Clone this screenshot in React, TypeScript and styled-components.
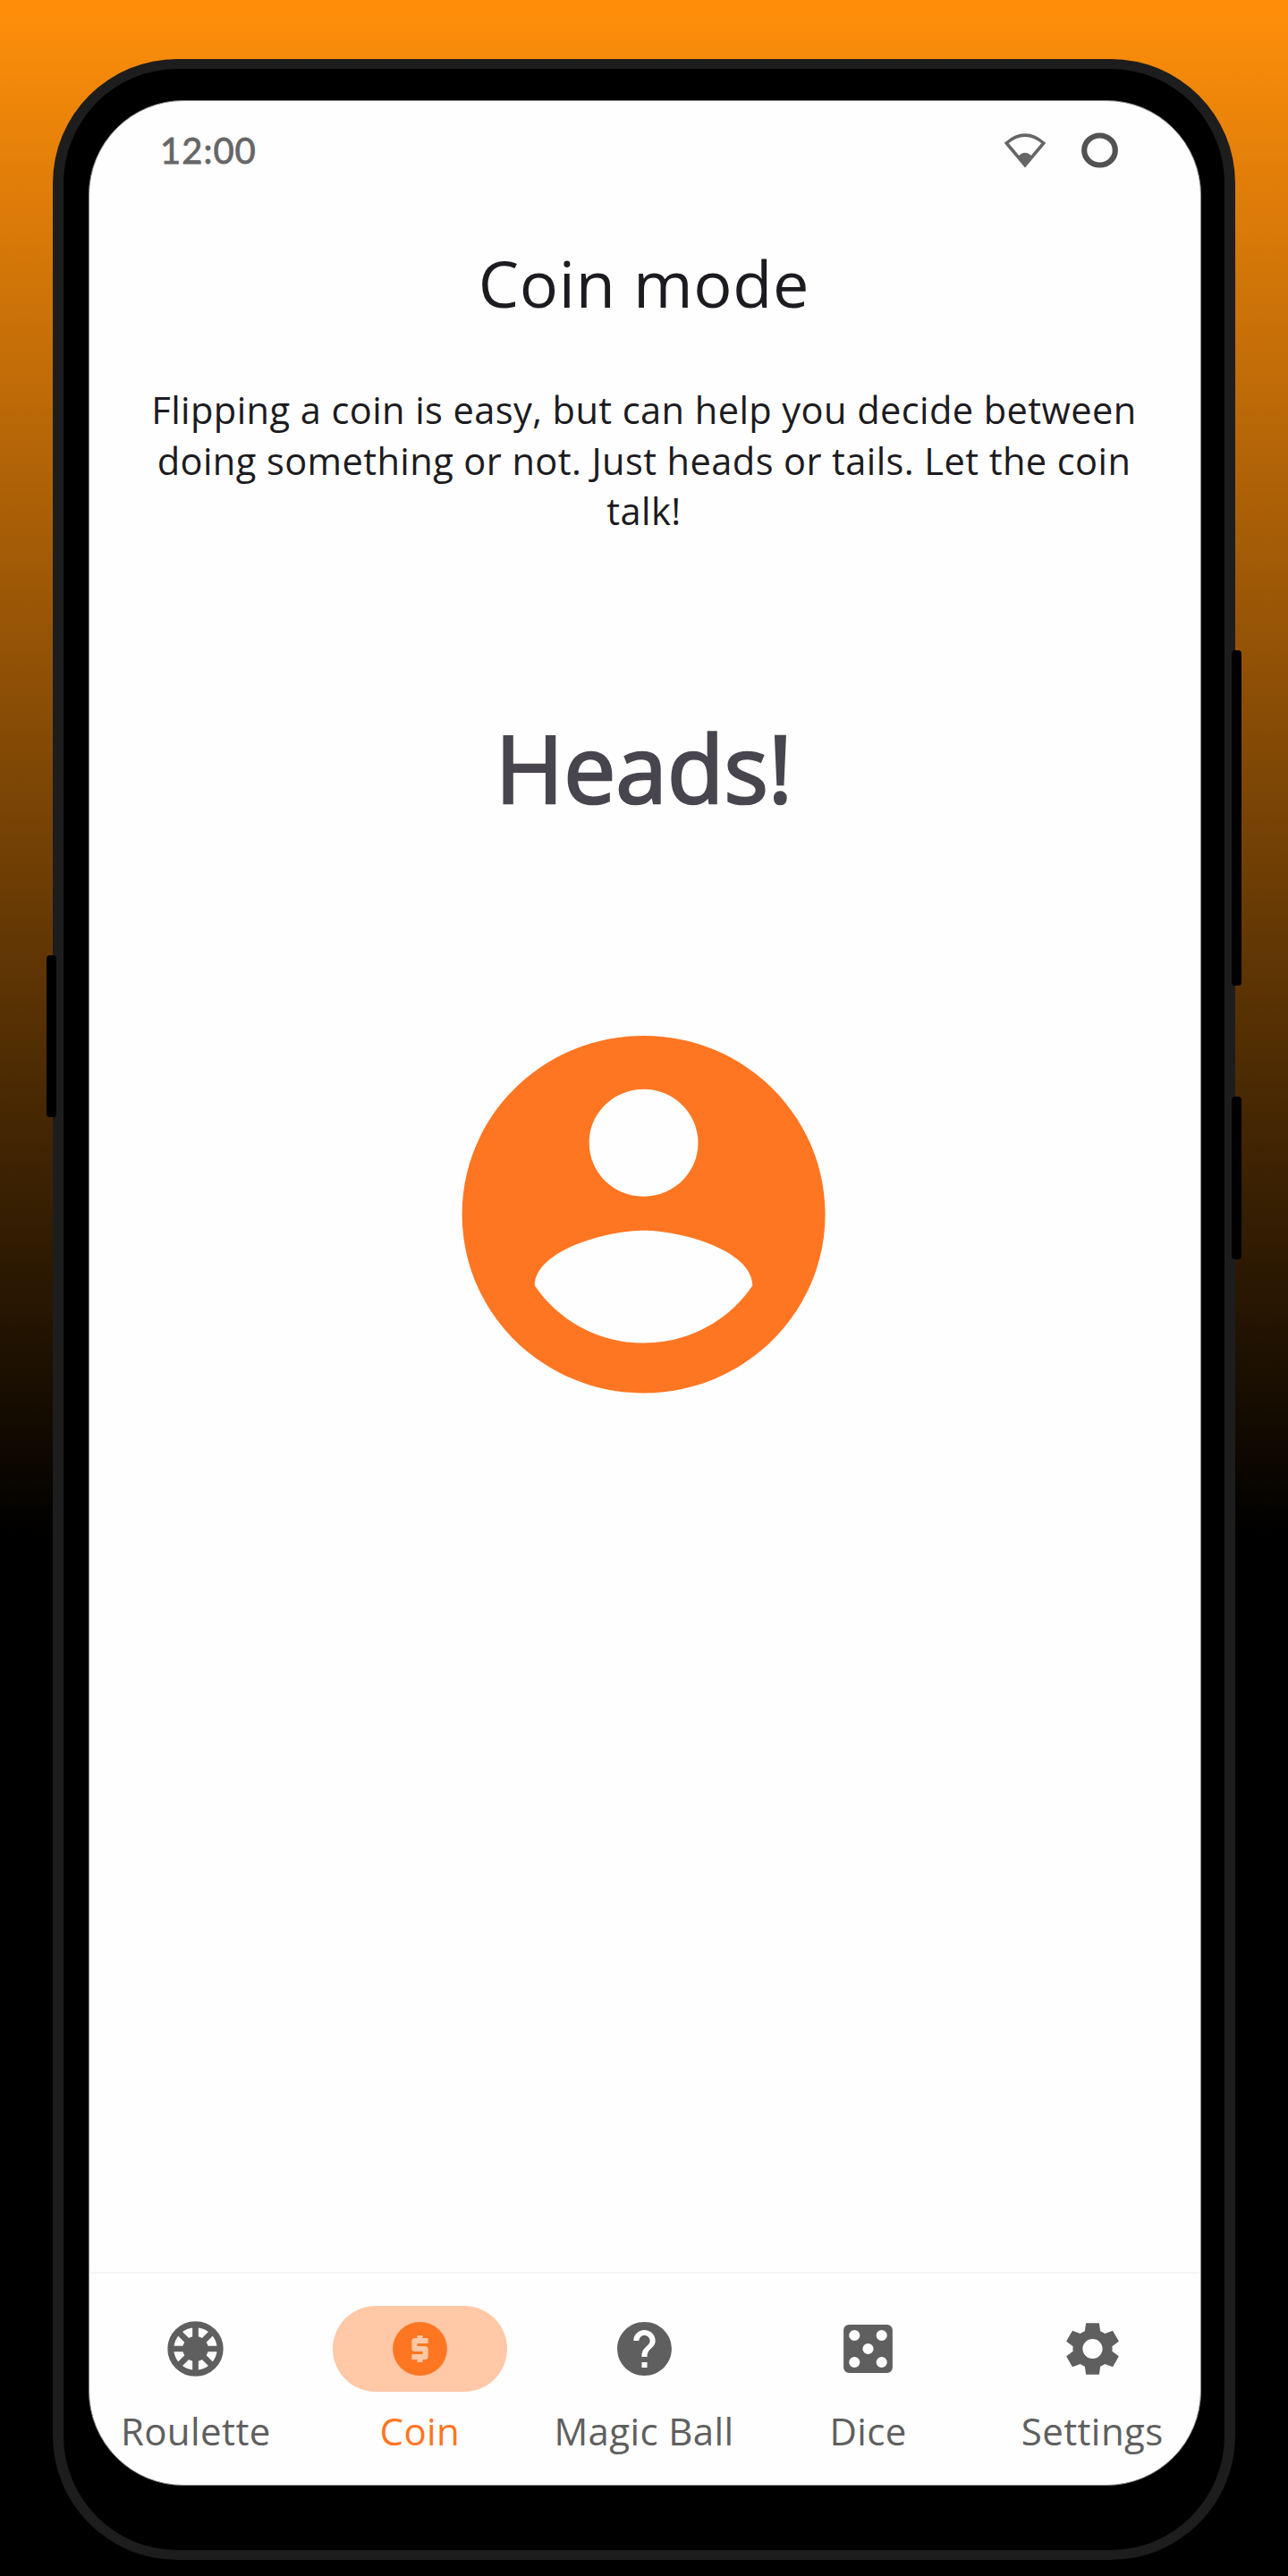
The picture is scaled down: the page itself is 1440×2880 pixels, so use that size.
import React from "react";
import styled, { createGlobalStyle } from "styled-components";

const GlobalStyle = createGlobalStyle`
  * { box-sizing: border-box; }
  html, body { margin: 0; padding: 0; background: #000; }
`;

const ORANGE = "#ff7622";
const GREY = "#5f5f5f";

const Backdrop = styled.div`
  width: 1440px;
  height: 2880px;
  padding: 66px 59px 18px;
  overflow: hidden;
  background: linear-gradient(180deg, #ff8f0a 0, #000 1720px);
  font-family: "Open Sans", "Noto Sans", sans-serif;
`;

const Phone = styled.div`
  position: relative;
  width: 1322px;
  height: 2796px;
  padding: 35px 28px 0;
  border: solid #1d1d1d;
  border-width: 11px 12px;
  border-radius: 139px;
  background: #000;
`;

const SideKey = styled.div<{ $side: "left" | "right"; $top: number; $height: number }>`
  position: absolute;
  ${(p) => p.$side}: -19px;
  top: ${(p) => p.$top}px;
  width: 11px;
  height: ${(p) => p.$height}px;
  border-radius: 4px;
  background: #000;
`;

const Screen = styled.div`
  display: flex;
  flex-direction: column;
  width: 1244px;
  height: 2667px;
  border: 1px solid #8a8a8a;
  border-radius: 106px;
  overflow: hidden;
  background: #fefefe;
`;

const StatusBar = styled.header`
  display: flex;
  align-items: center;
  justify-content: space-between;
  height: 110px;
  padding: 0 92px 0 79px;
`;

const Clock = styled.span`
  font-family: Lato, sans-serif;
  font-size: 40px;
  line-height: 48px;
  letter-spacing: 1px;
  color: #666;
  -webkit-text-stroke: 0.8px #666;
`;

const StatusIcons = styled.div`
  display: flex;
  align-items: center;
  gap: 40px;
`;

const Main = styled.main`
  display: flex;
  flex: 1;
  flex-direction: column;
  align-items: center;
  padding: 44px 60px 0 58px;
  text-align: center;
`;

const Title = styled.h1`
  margin: 0;
  font-size: 72px;
  font-weight: 400;
  line-height: 98px;
  letter-spacing: 0.7px;
  color: #1c1b20;
`;

const Description = styled.p`
  margin: 65px 0 0;
  font-size: 41.6px;
  line-height: 56.7px;
  letter-spacing: 0.4px;
  color: #1c1b20;
`;

const Result = styled.p`
  margin: 184.4px 0 0;
  font-size: 103.5px;
  font-weight: 400;
  line-height: 145px;
  letter-spacing: 0.1px;
  color: #48454e;
  -webkit-text-stroke: 2.7px #48454e;
`;

const CoinFace = styled.svg`
  width: 487.2px;
  height: 479.4px;
  margin-top: 188px;
  fill: ${ORANGE};
`;

const NavBar = styled.nav`
  display: flex;
  justify-content: center;
  height: 238px;
  padding: 36px 2px 0 0;
  border-top: 2px solid #f6f6f6;
`;

const NavItem = styled.div<{ $active: boolean }>`
  display: flex;
  flex: 0 0 250.6px;
  flex-direction: column;
  align-items: center;
  gap: 15px;
  color: ${(p) => (p.$active ? ORANGE : GREY)};
`;

const Pill = styled.div<{ $active: boolean }>`
  display: flex;
  align-items: center;
  justify-content: center;
  width: 195px;
  height: 96px;
  border-radius: 48px;
  background: ${(p) => (p.$active ? "#ffc8a6" : "transparent")};
`;

const NavIcon = styled.svg`
  width: 73px;
  height: 72px;
  fill: currentColor;
  stroke: none;
`;

const Label = styled.span`
  font-size: 42px;
  line-height: 57px;
  letter-spacing: 0.4px;
  white-space: nowrap;
`;

const RouletteGlyph = () => (
  <g stroke="currentColor" fill="none">
    <circle cx="12" cy="12" r="9.1" strokeWidth="2.3" />
    <circle cx="12" cy="12" r="4.7" fill="currentColor" stroke="none" />
    <path d="M12 3v18M3 12h18M5.64 5.64l12.72 12.72M18.36 5.64 5.64 18.36" strokeWidth="2.2" />
  </g>
);

const CoinGlyph = () => (
  <path
    fillRule="evenodd"
    d="M12 2a10 10 0 1 0 0 20 10 10 0 0 0 0-20zM11 17h2v-1h1c.55 0 1-.45 1-1v-3c0-.55-.45-1-1-1h-3v-1h4V8h-2V7h-2v1h-1c-.55 0-1 .45-1 1v3c0 .55.45 1 1 1h3v1H9v2h2v1z"
  />
);

const HelpGlyph = () => (
  <path d="M12 2C6.48 2 2 6.48 2 12s4.48 10 10 10 10-4.48 10-10S17.52 2 12 2zm1 17h-2v-2h2v2zm2.07-7.75l-.9.92C13.45 12.9 13 13.5 13 15h-2v-.5c0-1.1.45-2.1 1.17-2.83l1.24-1.26c.37-.36.59-.86.59-1.41 0-1.1-.9-2-2-2s-2 .9-2 2H8c0-2.21 1.79-4 4-4s4 1.79 4 4c0 .88-.36 1.68-.93 2.25z" />
);

const DiceGlyph = () => (
  <path
    fillRule="evenodd"
    d="M5 3h14a2 2 0 0 1 2 2v14a2 2 0 0 1-2 2H5a2 2 0 0 1-2-2V5a2 2 0 0 1 2-2zM7 5a2 2 0 1 0 0 4 2 2 0 0 0 0-4zM17 5a2 2 0 1 0 0 4 2 2 0 0 0 0-4zM12 10a2 2 0 1 0 0 4 2 2 0 0 0 0-4zM7 15a2 2 0 1 0 0 4 2 2 0 0 0 0-4zM17 15a2 2 0 1 0 0 4 2 2 0 0 0 0-4z"
  />
);

const SettingsGlyph = () => (
  <path
    fillRule="evenodd"
    d="M9.8 2.4h4.4q.2 0 .25.2l.4 2.8q.9.37 1.65.95l2.7-1.05q.2-.07.3.12l2.05 3.6q.1.2-.05.32l-2.3 1.72q.12.94 0 1.88l2.3 1.72q.15.12.05.32l-2.05 3.6q-.1.19-.3.12l-2.7-1.05q-.75.58-1.65.95l-.4 2.8q-.05.2-.25.2H9.8q-.2 0-.25-.2l-.4-2.8q-.9-.37-1.65-.95L4.8 18.7q-.2.07-.3-.12l-2.05-3.6q-.1-.2.05-.32l2.3-1.72q-.12-.94 0-1.88L2.5 9.34q-.15-.12-.05-.32L4.5 5.42q.1-.19.3-.12l2.7 1.05q.75-.58 1.65-.95l.4-2.8q.05-.2.25-.2zM12 8.35a3.65 3.65 0 1 0 0 7.3 3.65 3.65 0 0 0 0-7.3z"
  />
);

const items = [
  { label: "Roulette", Glyph: RouletteGlyph },
  { label: "Coin", Glyph: CoinGlyph },
  { label: "Magic Ball", Glyph: HelpGlyph },
  { label: "Dice", Glyph: DiceGlyph },
  { label: "Settings", Glyph: SettingsGlyph },
];

export default function App() {
  const active = "Coin";
  return (
    <>
      <GlobalStyle />
      <Backdrop>
        <Phone>
          <SideKey $side="left" $top={991} $height={181} />
          <SideKey $side="right" $top={650} $height={375} />
          <SideKey $side="right" $top={1149} $height={182} />
          <Screen>
            <StatusBar>
              <Clock>12:00</Clock>
              <StatusIcons>
                <svg width="46" height="39" viewBox="0 0 46 39">
                  <path d="M2.2 11Q23-6.6 43.8 11L23 35.6z" fill="none" stroke="#666" strokeWidth="3.6" />
                  <path d="M15 26Q23 17.5 31 26L23 37z" fill="#666" />
                </svg>
                <svg width="41" height="40" viewBox="0 0 41 40">
                  <ellipse cx="20.5" cy="20" rx="17.3" ry="16.5" fill="none" stroke="#525252" strokeWidth="6.2" />
                </svg>
              </StatusIcons>
            </StatusBar>
            <Main>
              <Title>Coin mode</Title>
              <Description>
                Flipping a coin is easy, but can help you decide between doing something or not. Just
                heads or tails. Let the coin talk!
              </Description>
              <Result>Heads!</Result>
              <CoinFace viewBox="0 0 24 24" preserveAspectRatio="none">
                <path d="M12 2C6.48 2 2 6.48 2 12s4.48 10 10 10 10-4.48 10-10S17.52 2 12 2zm0 3c1.66 0 3 1.34 3 3s-1.34 3-3 3-3-1.34-3-3 1.34-3 3-3zm0 14.2c-2.5 0-4.71-1.28-6-3.22.03-1.99 4-3.08 6-3.08 1.99 0 5.97 1.09 6 3.08-1.29 1.94-3.5 3.22-6 3.22z" />
              </CoinFace>
            </Main>
            <NavBar>
              {items.map(({ label, Glyph }) => (
                <NavItem key={label} $active={label === active}>
                  <Pill $active={label === active}>
                    <NavIcon viewBox="0 0 24 24" preserveAspectRatio="none">
                      <Glyph />
                    </NavIcon>
                  </Pill>
                  <Label>{label}</Label>
                </NavItem>
              ))}
            </NavBar>
          </Screen>
        </Phone>
      </Backdrop>
    </>
  );
}
